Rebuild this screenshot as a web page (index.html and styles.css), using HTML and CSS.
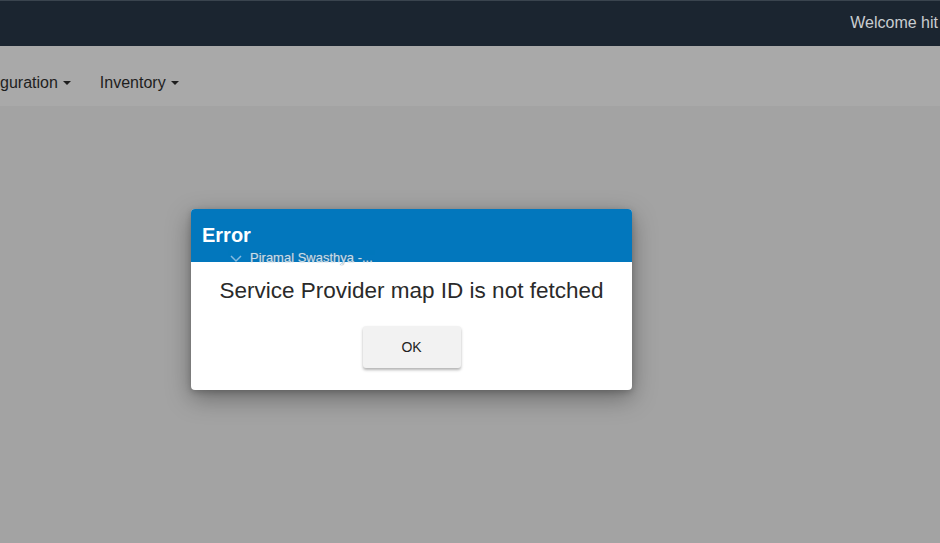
FILE: index.html
```html
<!DOCTYPE html>
<html lang="en">
<head>
  <meta charset="UTF-8" />
  <title>Error</title>
  <link rel="stylesheet" href="styles.css">
</head>
<body>
  <header class="topbar">
    <span class="welcome">Welcome hit</span>
  </header>
  <nav class="menu">
    <span class="menu-item">guration <span class="caret"></span></span>
    <span class="menu-item">Inventory <span class="caret"></span></span>
  </nav>
  <main class="content"></main>

  <div class="dialog">
    <div class="dialog-head">Error</div>
    <div class="dialog-body">
      <p class="message">Service Provider map ID is not fetched</p>
      <button class="ok">OK</button>
    </div>
    <div class="ghost">
      <svg width="14" height="10" viewBox="0 0 14 10"><path d="M2 3 L7 8 L12 3" fill="none" stroke="#9cc7e6" stroke-width="1.5"/></svg>
      <span>Piramal Swasthya -...</span>
    </div>
  </div>
</body>
</html>
```

FILE: styles.css
```css
html, body {
  margin: 0;
  height: 100%;
  overflow: hidden;
}
body {
  font-family: 'Liberation Sans', Arial, sans-serif;
  background: #a3a3a3;
  position: relative;
}
.topbar {
  height: 46px;
  background: #1b2530;
  border-top: 1px solid #3a444e;
  box-sizing: border-box;
  display: flex;
  align-items: center;
  justify-content: flex-end;
  padding-right: 2px;
}
.welcome {
  color: #c9cdd1;
  font-size: 16px;
  white-space: nowrap;
  margin-top: -2px;
}
.menu {
  height: 60px;
  background: #a9a9a9;
  display: flex;
  align-items: center;
  gap: 29px;
  padding-left: 0;
  font-size: 16px;
  color: #1e1e1e;
}
.menu-item {
  display: flex;
  align-items: center;
  gap: 5px;
  margin-top: 13px;
}
.caret {
  width: 0;
  height: 0;
  border-left: 4px solid transparent;
  border-right: 4px solid transparent;
  border-top: 4px solid #1e1e1e;
}
.dialog {
  position: absolute;
  left: 191px;
  top: 209px;
  width: 441px;
  height: 181px;
  background: #fff;
  border-radius: 4px;
  overflow: hidden;
  box-shadow: 0 8px 24px rgba(0,0,0,0.35), 0 2px 6px rgba(0,0,0,0.2);
}
.dialog-head {
  height: 53px;
  background: #0277bd;
  color: #fff;
  font-weight: bold;
  font-size: 20px;
  padding: 15px 0 0 11px;
  box-sizing: border-box;
}
.dialog-body {
  display: flex;
  flex-direction: column;
  align-items: center;
}
.message {
  margin: 16px 0 0;
  font-size: 22.5px;
  color: #2a2a2a;
}
.ok {
  margin-top: 22px;
  width: 98px;
  height: 42px;
  border: none;
  border-radius: 3px;
  background: #f2f2f2;
  font-family: inherit;
  font-size: 14px;
  color: #222;
  box-shadow: 0 2px 3px rgba(0,0,0,0.3);
}
.ghost {
  position: absolute;
  left: 38px;
  top: 41px;
  display: flex;
  align-items: center;
  gap: 7px;
  font-size: 13px;
  color: #e8f1f8;
  text-shadow: 0 0 1px #5a7d99, 0 0 1px #5a7d99;
  opacity: 0.85;
}
```
